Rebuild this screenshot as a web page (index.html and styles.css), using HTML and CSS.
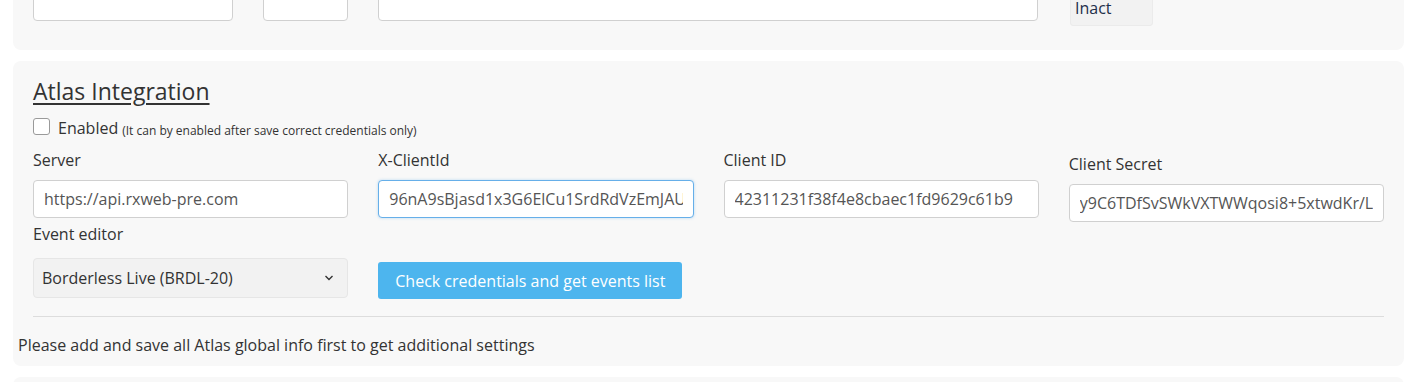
FILE: index.html
```html
<!DOCTYPE html>
<html lang="en">
<head>
  <meta charset="UTF-8" />
  <title>Atlas Integration</title>
  <link rel="stylesheet" href="styles.css">
</head>
<body>
  <div class="page">

    <div class="panel panel-top">
      <div class="top-row">
        <input class="form-control w-name" type="text">
        <input class="form-control w-short" type="text">
        <input class="form-control w-wide" type="text">
        <span class="status-badge">Inact</span>
      </div>
    </div>

    <div class="panel">
      <div class="panel-body">
        <h2 class="panel-title">Atlas Integration</h2>
        <label class="check">
          <input type="checkbox">
          <span>Enabled</span>
          <small>(It can by enabled after save correct credentials only)</small>
        </label>

        <div class="field-grid">
          <div class="field">
            <label>Server</label>
            <input class="form-control" type="text" value="https://api.rxweb-pre.com">
          </div>
          <div class="field">
            <label>X-ClientId</label>
            <input class="form-control focused" type="text" value="96nA9sBjasd1x3G6ElCu1SrdRdVzEmJAUw">
          </div>
          <div class="field">
            <label>Client ID</label>
            <input class="form-control" type="text" value="42311231f38f4e8cbaec1fd9629c61b9">
          </div>
          <div class="field field-low">
            <label>Client Secret</label>
            <input class="form-control" type="text" value="y9C6TDfSvSWkVXTWWqosi8+5xtwdKr/Lq">
          </div>

          <div class="field">
            <label>Event editor</label>
            <div class="select-box">
              <span>Borderless Live (BRDL-20)</span>
              <svg width="10" height="6" viewBox="0 0 10 6"><path d="M1.5 1 L5 4.5 L8.5 1" fill="none" stroke="#333" stroke-width="1.4"/></svg>
            </div>
          </div>
          <div class="field field-btn">
            <button class="btn-primary">Check credentials and get events list</button>
          </div>
        </div>

        <hr>
      </div>
      <p class="note">Please add and save all Atlas global info first to get additional settings</p>
    </div>

    <div class="panel panel-next"></div>
  </div>
</body>
</html>
```

FILE: styles.css
```css
body {
  margin: 0;
  background: #fff;
  color: #333;
  font-family: 'Open Sans', 'Noto Sans', sans-serif;
  font-size: 16px;
  overflow: hidden;
}
.page {
  padding: 0 11px 0 13px;
  margin-top: -40px;
}
.panel {
  background: #f8f8f8;
  border-radius: 8px;
  margin-bottom: 11px;
}
.panel-top {
  padding: 23px 20px 0;
  height: 67px;
}
.top-row {
  display: flex;
  align-items: flex-start;
}
.form-control {
  box-sizing: border-box;
  height: 38px;
  border: 1px solid #d0d0d0;
  border-radius: 4px;
  background: #fff;
  padding: 0 10px;
  font-family: inherit;
  font-size: 16px;
  color: #555;
  outline: none;
}
.w-name { width: 200px; margin-right: 30px; }
.w-short { width: 85px; margin-right: 30px; }
.w-wide { width: 660px; margin-right: 32px; }
.status-badge {
  box-sizing: border-box;
  display: block;
  width: 83px;
  height: 40px;
  margin-top: 3px;
  padding: 11px 0 0 4px;
  background: #f2f2f2;
  border: 1px solid #ebebeb;
  border-radius: 3px;
  color: #1e2f4a;
  font-size: 16px;
  line-height: 20px;
}

.panel-body {
  padding: 14px 20px 0;
}
.panel-title {
  margin: 0 0 8px;
  font-size: 23px;
  font-weight: normal;
  line-height: 32px;
  text-decoration: underline;
  text-underline-offset: 3px;
  text-decoration-thickness: 2px;
}
.check {
  display: flex;
  align-items: center;
  height: 22px;
}
.check input {
  appearance: none;
  width: 17px;
  height: 17px;
  margin: 0 8px 0 0;
  background: #fff;
  border: 1px solid #9a9a9a;
  border-radius: 3px;
}
.check span {
  position: relative;
  top: 2px;
}
.check small {
  font-size: 12px;
  margin-left: 4px;
  position: relative;
  top: 4px;
}

.field-grid {
  display: grid;
  grid-template-columns: repeat(4, 1fr);
  column-gap: 30px;
  row-gap: 1px;
  margin-top: 12px;
}
.field label {
  display: block;
  line-height: 22px;
  margin-bottom: 9px;
}
.field .form-control {
  width: 100%;
}
.field-low {
  padding-top: 4px;
}
.focused {
  border-color: #66afe9;
  box-shadow: 0 0 3px rgba(102, 175, 233, 0.45);
}
.select-box {
  box-sizing: border-box;
  height: 40px;
  margin-top: 13px;
  display: flex;
  align-items: center;
  justify-content: space-between;
  padding: 0 13px 0 8px;
  background: #f2f2f2;
  border: 1px solid #e6e6e6;
  border-radius: 4px;
}
.field-btn {
  display: flex;
  align-items: flex-start;
  padding-top: 39px;
}
.btn-primary {
  height: 37px;
  padding: 0 17px;
  background: #4db5ee;
  border: none;
  border-radius: 3px;
  color: #fff;
  font-family: inherit;
  font-size: 16px;
}
hr {
  border: none;
  border-top: 1px solid #ddd;
  margin: 17px 0 0;
}
.note {
  margin: 0;
  padding: 17px 5px 10px;
  line-height: 22px;
}
.panel-next {
  height: 40px;
}
```
